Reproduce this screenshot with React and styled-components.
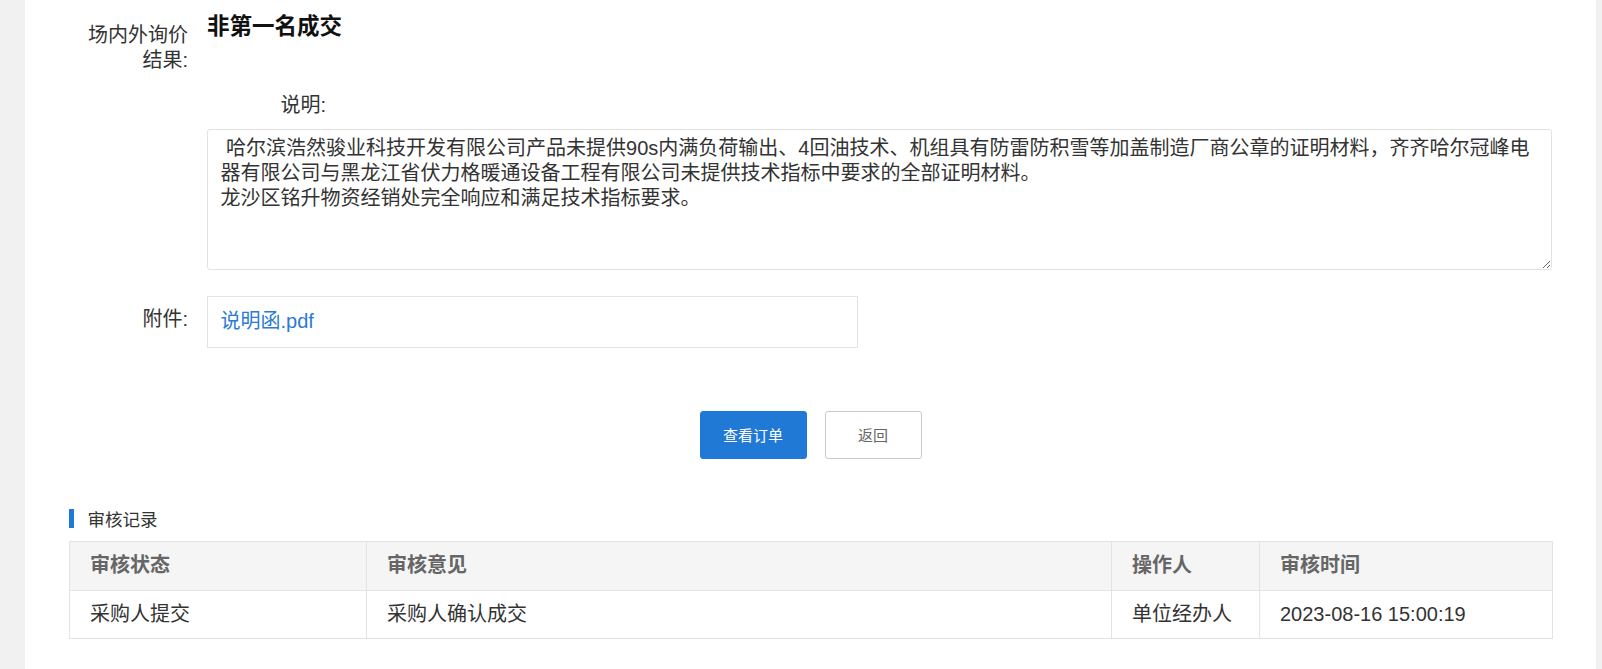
import React from "react";
import styled, { createGlobalStyle } from "styled-components";

const GlobalStyle = createGlobalStyle`
  html, body { margin: 0; padding: 0; }
  body {
    background: #f1f1f1;
    font-family: "Liberation Sans", "Noto Sans CJK SC", sans-serif;
    color: #333;
  }
`;

const FONT = `"Liberation Sans", "Noto Sans CJK SC", sans-serif`;

const Page = styled.div`
  display: flex;
  min-height: 669px;
  padding: 0 6px 0 25px;
  background: #f1f1f1;
`;

const Panel = styled.main`
  flex: 1;
  min-width: 0;
  background: #fff;
  padding: 12px 44px 40px;
`;

const FormRow = styled.div`
  display: flex;
  align-items: flex-start;
  margin-top: ${(p) => p.$mt || 0}px;
`;

const Label = styled.div`
  flex: 0 0 138px;
  box-sizing: border-box;
  padding: ${(p) => p.$pt || 0}px 19px 0 9px;
  text-align: right;
  font-size: 20px;
  line-height: 25px;
  color: #333;
`;

const Value = styled.div`
  flex: 1;
  min-width: 0;
`;

const ResultTitle = styled.div`
  font-size: 22.5px;
  font-weight: 700;
  line-height: 30px;
  color: #111;
`;

const Indented = styled.div`
  margin-left: 138px;
`;

const Note = styled.textarea`
  display: block;
  width: 100%;
  height: 141px;
  box-sizing: border-box;
  margin: 11px 0 0;
  padding: 6px 12.5px;
  border: 1px solid #e2e2e2;
  border-radius: 3px;
  font-family: ${FONT};
  font-size: 20px;
  line-height: 25px;
  color: #333;
  background: #fff;
  outline: none;
`;

const AttachBox = styled.div`
  width: 651px;
  height: 52px;
  box-sizing: border-box;
  border: 1px solid #e3e3e3;
  padding: 12.5px 12.5px;
`;

const FileLink = styled.a`
  font-size: 20px;
  line-height: 25px;
  color: #2a7bd6;
  text-decoration: none;
  display: block;
`;

const Actions = styled.div`
  display: flex;
  justify-content: center;
  gap: 18px;
  margin-top: 63px;
`;

const Button = styled.button`
  width: ${(p) => p.$w}px;
  height: 48px;
  box-sizing: border-box;
  border-radius: 3px;
  font-family: ${FONT};
  font-size: 15px;
  cursor: pointer;
  border: 1px solid ${(p) => (p.$primary ? "#2179d6" : "#c8c8c8")};
  background: ${(p) => (p.$primary ? "#2179d6" : "#fff")};
  color: ${(p) => (p.$primary ? "#fff" : "#666")};
  padding: 0;
`;

const SectionTitle = styled.div`
  display: flex;
  align-items: center;
  height: 25px;
  margin-top: 47.5px;
  font-size: 17.5px;
  color: #333;
  &::before {
    content: "";
    width: 4.5px;
    height: 19px;
    background: #2179d6;
    margin-right: 14px;
  }
`;

const Table = styled.table`
  width: 100%;
  margin-top: 9.5px;
  border-collapse: collapse;
  table-layout: fixed;
  font-size: 20px;
  line-height: 25px;
`;

const Th = styled.th`
  height: 48px;
  padding: 0 20px;
  text-align: left;
  font-weight: 700;
  color: #666;
  background: #f5f5f5;
  border: 1px solid #e3e3e3;
`;

const Td = styled.td`
  height: 47px;
  padding: 0 20px;
  text-align: left;
  color: #333;
  border: 1px solid #e3e3e3;
`;

const noteText =
  " 哈尔滨浩然骏业科技开发有限公司产品未提供90s内满负荷输出、4回油技术、机组具有防雷防积雪等加盖制造厂商公章的证明材料，齐齐哈尔冠峰电器有限公司与黑龙江省伏力格暖通设备工程有限公司未提供技术指标中要求的全部证明材料。\n龙沙区铭升物资经销处完全响应和满足技术指标要求。";

const columns = [
  { title: "审核状态", width: 297 },
  { title: "审核意见", width: 745 },
  { title: "操作人", width: 148 },
  { title: "审核时间", width: 293 },
];

const records = [["采购人提交", "采购人确认成交", "单位经办人", "2023-08-16 15:00:19"]];

export default function App() {
  return (
    <>
      <GlobalStyle />
      <Page>
        <Panel>
          <FormRow>
            <Label $pt={10.5}>场内外询价结果:</Label>
            <Value>
              <ResultTitle>非第一名成交</ResultTitle>
            </Value>
          </FormRow>

          <Indented>
            <FormRow $mt={20}>
              <Label>说明:</Label>
            </FormRow>
            <Note readOnly defaultValue={noteText} />
          </Indented>

          <FormRow $mt={26}>
            <Label $pt={11.5}>附件:</Label>
            <Value>
              <AttachBox>
                <FileLink href="#">说明函.pdf</FileLink>
              </AttachBox>
            </Value>
          </FormRow>

          <Actions>
            <Button $primary $w={107}>查看订单</Button>
            <Button $w={97}>返回</Button>
          </Actions>

          <SectionTitle>审核记录</SectionTitle>
          <Table>
            <colgroup>
              {columns.map((c) => (
                <col key={c.title} style={{ width: c.width }} />
              ))}
            </colgroup>
            <thead>
              <tr>
                {columns.map((c) => (
                  <Th key={c.title}>{c.title}</Th>
                ))}
              </tr>
            </thead>
            <tbody>
              {records.map((r, i) => (
                <tr key={i}>
                  {r.map((cell, j) => (
                    <Td key={j}>{cell}</Td>
                  ))}
                </tr>
              ))}
            </tbody>
          </Table>
        </Panel>
      </Page>
    </>
  );
}
